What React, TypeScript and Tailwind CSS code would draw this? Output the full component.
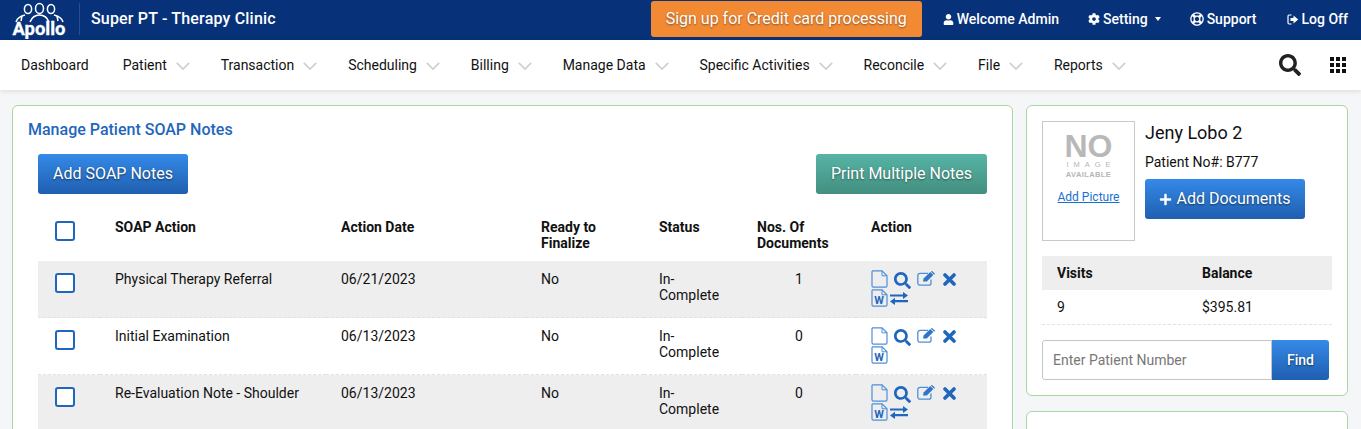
import React from "react";
import { FaUser, FaCog, FaRegLifeRing, FaSearch, FaPlus } from "react-icons/fa";

const F = "font-['Roboto',sans-serif]";
const blueBtn = "bg-gradient-to-b from-[#358ae8] to-[#1f5fb0] text-white rounded-[3px] [text-shadow:0_1px_2px_rgba(0,0,0,0.55)]";

function Logo() {
  return (
    <svg width="56" height="38" viewBox="0 0 56 38" className="shrink-0">
      <g fill="none" stroke="#fff" strokeWidth="1.5">
        <ellipse cx="28.5" cy="7.5" rx="4" ry="5" />
        <ellipse cx="17" cy="8" rx="3.6" ry="4.5" />
        <ellipse cx="40" cy="8" rx="3.6" ry="4.5" />
        <path d="M19 21 C21 16 24 14 28.5 14 C33 14 36 16 38 21" />
        <path d="M5 21 C6 17 10 15 14 14 M52 21 C51 17 47 15 43 14" />
        <path d="M11 15 L10 20 M46 15 L47 20" />
      </g>
      <text x="28" y="33.5" textAnchor="middle" fill="#fff" fontSize="18" fontWeight="700" stroke="#fff" strokeWidth="0.3" textLength="53" lengthAdjust="spacingAndGlyphs" fontFamily="'Liberation Sans Narrow','Roboto',sans-serif">Apollo</text>
    </svg>
  );
}

function LogOffIcon() {
  return (
    <svg width="12" height="11" viewBox="0 0 12 11" fill="none">
      <path d="M4.5 1H2.2A1.2 1.2 0 0 0 1 2.2v6.6A1.2 1.2 0 0 0 2.2 10h2.3" stroke="#fff" strokeWidth="1.2" />
      <path d="M6.5 1.6 11.2 5.5 6.5 9.4V7H3.5V4h3z" fill="#fff" />
    </svg>
  );
}

function Chevron() {
  return (
    <svg width="14" height="8" viewBox="0 0 14 8" fill="none" className="ml-[9px] mt-[1px]">
      <path d="M0.8 0.8 7 7 13.2 0.8" stroke="#cfcfcf" strokeWidth="1.7" />
    </svg>
  );
}

function FileIcon() {
  return (
    <svg width="17" height="18" viewBox="0 0 17 18" fill="none" className="text-[#4f8fd8]">
      <path d="M1.7.8H11L16 5.8V15.8a1.4 1.4 0 0 1-1.4 1.4H2.4A1.4 1.4 0 0 1 1 15.8V1.5z" stroke="currentColor" strokeWidth="1.2" />
      <path d="M11 .8V5.8H16" stroke="currentColor" strokeWidth="1" />
    </svg>
  );
}

function WordIcon() {
  return (
    <svg width="17" height="18" viewBox="0 0 17 18" fill="none" className="text-[#4f8fd8]">
      <path d="M1.7.8H11L16 5.8V15.8a1.4 1.4 0 0 1-1.4 1.4H2.4A1.4 1.4 0 0 1 1 15.8V1.5z" stroke="currentColor" strokeWidth="1.2" />
      <path d="M11 .8V5.8H16" stroke="currentColor" strokeWidth="1" />
      <text x="8" y="15" textAnchor="middle" fontSize="11" fontWeight="700" fill="#1f66bd" fontFamily="Roboto,sans-serif">W</text>
    </svg>
  );
}

function ExchangeIcon() {
  return (
    <svg width="18" height="13" viewBox="0 0 18 13" fill="#1f66bd">
      <path d="M0 2.6H13V0L18 3.6 13 7V4.6H0z" />
      <path d="M18 8H5V5.8L0 9.4 5 13V10.2H18z" />
    </svg>
  );
}

function EditIcon() {
  return (
    <svg width="18" height="15" viewBox="0 0 18 15" fill="none" className="ml-[6px] mt-[1px]">
      <path d="M14 8.5V12a2.2 2.2 0 0 1-2.2 2.2H3A2.2 2.2 0 0 1 .8 12V4.5A2.2 2.2 0 0 1 3 2.3H11" stroke="#4f8fd8" strokeWidth="1.3" />
      <path d="M6 10.5 6.6 7.6 13.2 1 16.4 4 9.8 10.6z" fill="#2f76c8" />
      <path d="M14.4 0.2 17.6 3.2" stroke="#2f76c8" strokeWidth="1.2" />
    </svg>
  );
}

function TimesIcon() {
  return (
    <svg width="13" height="13" viewBox="0 0 13 13" fill="none" className="ml-[8px] mt-[3px]">
      <path d="M2 2 11 11 M11 2 2 11" stroke="#1f66bd" strokeWidth="3.6" strokeLinecap="round" />
    </svg>
  );
}

function Checkbox() {
  return <span className="block w-5 h-5 rounded-[3px] border-2 border-[#1f66bd] bg-white" />;
}

const nav: [string, string][] = [
  ["Dashboard", "mr-[34px]"],
  ["Patient", "mr-[30.9px]"],
  ["Transaction", "mr-[30.9px]"],
  ["Scheduling", "mr-[30.9px]"],
  ["Billing", "mr-[30.9px]"],
  ["Manage Data", "mr-[30.9px]"],
  ["Specific Activities", "mr-[30.9px]"],
  ["Reconcile", "mr-[30.9px]"],
  ["File", "mr-[30.9px]"],
  ["Reports", "mr-[30.9px]"],
];

const rows = [
  { name: "Physical Therapy Referral", date: "06/21/2023", docs: "1", ex: true, bg: "bg-[#eeeeee]" },
  { name: "Initial Examination", date: "06/13/2023", docs: "0", ex: false, bg: "bg-white" },
  { name: "Re-Evaluation Note - Shoulder", date: "06/13/2023", docs: "0", ex: true, bg: "bg-[#eeeeee]" },
];

const td = "border-b border-dashed border-[#e2e2e2] ";

function Actions({ ex }: { ex: boolean }) {
  return (
    <div className="flex flex-wrap w-[92px] items-start">
      <FileIcon />
      <FaSearch className="ml-[6px] mt-[2px] text-[17px] text-[#1f66bd]" />
      <EditIcon />
      <TimesIcon />
      <div className="w-full h-0" />
      <WordIcon />
      {ex && <span className="ml-[2px] mt-[3px]"><ExchangeIcon /></span>}
    </div>
  );
}

export default function App() {
  return (
    <div className={`${F} h-[429px] overflow-hidden bg-[#f4f6f8] text-[14px] text-[#111]`}>
      <header className="h-10 bg-[#07327a] text-white flex items-center pl-[11px] pr-[13px]">
        <Logo />
        <div className="w-px h-[32px] bg-[#2a4c8c] ml-[12px] mb-[3px]" />
        <div className="ml-[11px] mb-[3px] text-[16px] tracking-[0.18px] font-medium whitespace-nowrap">Super PT - Therapy Clinic</div>
        <div className="ml-auto flex items-center text-[14px] font-medium whitespace-nowrap pb-[2px]">
          <div className="w-[271px] h-[36px] flex items-center justify-center bg-[#f28a34] rounded-[3px] text-[16px] font-normal [text-shadow:0_1px_2px_rgba(0,0,0,0.45)] mr-[21px]">Sign up for Credit card processing</div>
          <span className="flex items-center gap-[3px] mr-[29px]"><FaUser className="text-[11px]" />Welcome Admin</span>
          <span className="flex items-center gap-[3px] mr-[29px]"><FaCog className="text-[12px]" />Setting<span className="ml-[4px] w-0 h-0 border-x-[3.5px] border-t-[4px] border-x-transparent border-t-white" /></span>
          <span className="flex items-center gap-[3px] mr-[30px]"><FaRegLifeRing className="text-[14px]" />Support</span>
          <span className="flex items-center gap-[3px]"><LogOffIcon />Log Off</span>
        </div>
      </header>
      <nav className="h-[50px] bg-white shadow-[0_1px_5px_rgba(0,0,0,0.12)] flex items-center pl-[21px] pr-[15px] relative">
        {nav.map(([n, m]) => (
          <div key={n} className={`flex items-center ${m}`}>
            <span>{n}</span>
            {n !== "Dashboard" && <Chevron />}
          </div>
        ))}
        <FaSearch className="ml-auto text-[22px] text-[#222]" />
        <div className="ml-[29px] grid grid-cols-3 gap-[2px]">
          {Array.from({ length: 9 }).map((_, i) => (
            <span key={i} className="block w-[4px] h-[4px] bg-[#111]" />
          ))}
        </div>
      </nav>
      <main className="flex items-start gap-[13px] pl-3 pr-3 pt-[15px]">
        <section className="w-[1001px] h-[400px] shrink-0 bg-white border border-[#a9d6a5] rounded-[6px] pl-[25px] pr-[25px] pt-[14px]">
          <h2 className="-ml-[10px] text-[#1f66bd] text-[16px] font-medium leading-[19px]">Manage Patient SOAP Notes</h2>
          <div className="flex justify-between mt-[15px]">
            <button className={`${blueBtn} w-[150px] h-10 text-[16px]`}>Add SOAP Notes</button>
            <button className="w-[171px] h-10 text-[16px] text-white rounded-[3px] bg-gradient-to-b from-[#57b4a6] to-[#438f80] [text-shadow:0_1px_2px_rgba(0,0,0,0.45)]">Print Multiple Notes</button>
          </div>
          <table className="w-[949px] mt-[16px] table-fixed border-separate border-spacing-0 text-left">
            <colgroup>
              <col className="w-[62px]" /><col className="w-[226px]" /><col className="w-[200px]" /><col className="w-[118px]" /><col className="w-[98px]" /><col className="w-[114px]" /><col className="w-[131px]" />
            </colgroup>
            <thead>
              <tr className="h-[51px] align-top font-bold text-[14px] leading-[16px]">
                <th className="pl-[17px] pt-[11px]"><Checkbox /></th>
                <th className="pl-[15px] pt-[9px] font-bold">SOAP Action</th>
                <th className="pl-[15px] pt-[9px] font-bold">Action Date</th>
                <th className="pl-[15px] pt-[9px] font-bold">Ready to<br />Finalize</th>
                <th className="pl-[15px] pt-[9px] font-bold">Status</th>
                <th className="pl-[15px] pt-[9px] font-bold">Nos. Of<br />Documents</th>
                <th className="pl-[15px] pt-[9px] font-bold">Action</th>
              </tr>
            </thead>
            <tbody>
              {rows.map((r) => (
                <tr key={r.name} className={`${r.bg} h-[57px] align-top leading-[16px]`}>
                  <td className={`${td}pl-[17px] pt-[12px]`}><Checkbox /></td>
                  <td className={`${td}pl-[15px] pt-[10px]`}>{r.name}</td>
                  <td className={`${td}pl-[15px] pt-[10px]`}>{r.date}</td>
                  <td className={`${td}pl-[15px] pt-[10px]`}>No</td>
                  <td className={`${td}pl-[15px] pt-[10px]`}>In-<br />Complete</td>
                  <td className={`${td}pt-[10px] text-center`}>{r.docs}</td>
                  <td className={`${td}pl-[15px] pt-[9px]`}><Actions ex={r.ex} /></td>
                </tr>
              ))}
            </tbody>
          </table>
        </section>
        <aside className="w-[322px] shrink-0 flex flex-col gap-[15px]">
          <section className="h-[291px] bg-white border border-[#a9d6a5] rounded-[6px] pl-[15px] pr-[15px] pt-[15px]">
            <div className="flex">
              <div className="w-[93px] h-[120px] border border-[#c9c9c9] flex flex-col items-center pt-[10px]">
                <div className="font-['Liberation_Sans',sans-serif] text-[32px] font-bold leading-[28px] text-[#b8b8b8]">NO</div>
                <div className="font-['Liberation_Sans',sans-serif] text-[7.5px] leading-[10px] tracking-[5px] text-[#b5b5b5] ml-[5px]">IMAGE</div>
                <div className="font-['Liberation_Sans',sans-serif] text-[7.5px] font-bold leading-[10px] tracking-[0.4px] text-[#b5b5b5]">AVAILABLE</div>
                <a className="text-[12px] leading-[14px] text-[#1a6fd0] underline mt-[10px]">Add Picture</a>
              </div>
              <div className="ml-[10px]">
                <div className="text-[18px] leading-[20px] mt-[2px]">Jeny Lobo 2</div>
                <div className="text-[14px] leading-[16px] mt-[11px]">Patient No#: B777</div>
                <button className={`${blueBtn} w-[160px] h-10 mt-[9px] text-[16px] flex items-center justify-center gap-[4px]`}><FaPlus className="text-[13px]" />Add Documents</button>
              </div>
            </div>
            <div className="mt-[15px] h-[34px] bg-[#eeeeee] flex items-center font-bold text-[14px]">
              <span className="pl-[15px] w-[160px]">Visits</span>
              <span>Balance</span>
            </div>
            <div className="h-[35px] flex items-center border-b border-dashed border-[#e2e2e2] text-[14px]">
              <span className="pl-[15px] w-[160px]">9</span>
              <span>$395.81</span>
            </div>
            <div className="flex mt-[15px] w-[287px] h-10">
              <input readOnly placeholder="Enter Patient Number" className="w-[230px] h-10 border border-[#c4c4c4] rounded-l-[3px] px-[10px] text-[14px] placeholder:text-[#777] outline-none" />
              <button className="w-[57px] h-10 bg-gradient-to-b from-[#358ae8] to-[#1f5fb0] text-white rounded-r-[3px] text-[14px] font-medium [text-shadow:0_1px_2px_rgba(0,0,0,0.55)]">Find</button>
            </div>
          </section>
          <section className="h-[60px] bg-white border border-[#a9d6a5] rounded-[6px]" />
        </aside>
      </main>
    </div>
  );
}
